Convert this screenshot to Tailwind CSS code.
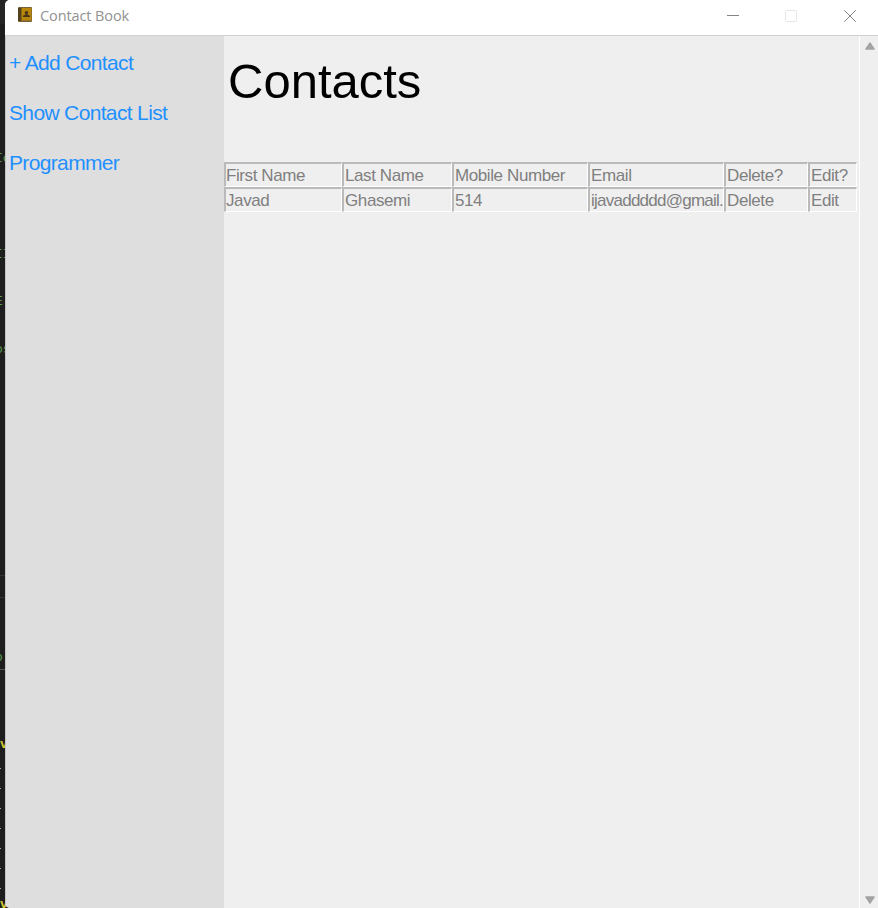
<!DOCTYPE html>
<html lang="en">
<head>
<meta charset="utf-8">
<title>Contact Book</title>
<script src="https://cdn.jsdelivr.net/npm/@tailwindcss/browser@4"></script>
</head>
<body class="relative w-[878px] h-[908px] overflow-hidden bg-[#1e1e1e] font-['Liberation_Sans',Arial,sans-serif]">
<!-- editor behind the window -->
<div class="absolute left-0 top-0 w-[8px] h-[908px] overflow-hidden text-[13px] leading-[16px] font-['Liberation_Mono',monospace] text-[#5c9a4c]">
  <div class="absolute top-0 w-2 h-6 bg-[#252526]"></div>
  <span class="absolute -left-[5px] top-[151px]">Ic</span>
  <span class="absolute -left-[5px] top-[247px]">II</span>
  <span class="absolute -left-[5px] top-[294px]">E</span>
  <span class="absolute -left-[5px] top-[342px]">os</span>
  <span class="absolute -left-[5px] top-[650px]">o</span>
  <div class="absolute top-[575px] w-2 h-px bg-[#333]"></div>
  <div class="absolute top-[597px] w-2 h-px bg-[#333]"></div>
  <div class="absolute top-[669px] w-2 h-px bg-[#555]"></div>
  <span class="absolute left-0 top-[737px] font-bold text-[#d8c832]">v</span>
  <div class="absolute top-[768px] w-px h-px bg-[#aaa]"></div>
  <div class="absolute top-[788px] w-px h-px bg-[#aaa]"></div>
  <div class="absolute top-[808px] w-px h-px bg-[#aaa]"></div>
  <div class="absolute top-[828px] w-px h-px bg-[#aaa]"></div>
  <div class="absolute top-[848px] w-px h-px bg-[#aaa]"></div>
  <div class="absolute top-[868px] w-px h-px bg-[#aaa]"></div>
  <div class="absolute top-[888px] w-px h-px bg-[#aaa]"></div>
  <span class="absolute left-0 top-[897px] font-bold text-[#d8c832]">v</span>
</div>
<div class="relative ml-[5px] w-[873px] h-[908px] flex flex-col bg-[#efefef] rounded-tl-[5px] rounded-bl-[5px] overflow-hidden">
  <header class="h-[36px] shrink-0 flex items-center bg-white border-b border-[#d0d0d0]">
    <svg class="ml-[13px] -mt-[6px] w-[14px] h-[15px] shrink-0" viewBox="0 0 14 15">
      <rect width="14" height="15" rx="1" fill="#776139"/>
      <rect x="0" y="1" width="3" height="13" fill="#54421f"/>
      <rect x="3" y="1" width="1" height="13" fill="#8a6510"/>
      <rect x="4" y="1" width="9.5" height="12.5" fill="#b8860b"/>
      <circle cx="8.500" cy="5.700" r="1.800" fill="#46351a"/>
      <path d="M5 10V8.800Q6.500 7.800 8 7.300H9Q10.500 7.800 12 8.800V10Z" fill="#46351a"/>
    </svg>
    <div class="ml-[8px] -mt-[4px] w-[120px] whitespace-nowrap text-[14.5px] leading-[20px] text-[#929292] font-['Open_Sans','Noto_Sans',sans-serif] tracking-[-0.1px]">Contact Book</div>
    <svg class="ml-auto w-[140px] h-[35px]" viewBox="0 0 140 35" fill="none">
      <rect x="47.500" y="10.500" width="11" height="11" rx="1" stroke="#e7e7e7"/>
      <path d="M106.300 10.300L117.700 21.700M117.700 10.300L106.300 21.700" stroke="#858585"/>
    </svg>
    <div class="absolute left-[722px] top-[15px] w-[12px] h-px bg-[#858585]"></div>
  </header>
  <div class="flex flex-1 min-h-0">
    <nav class="w-[219px] shrink-0 bg-[#dedede] border-l border-[#c4c4c4] pl-[3px] pt-[2px] flex flex-col text-[21px] leading-[50px] text-[#1e90ff] tracking-[-0.65px]">
      <a>+ Add Contact</a>
      <a>Show Contact List</a>
      <a>Programmer</a>
    </nav>
    <main class="w-[635px] shrink-0">
      <h1 class="pl-[4px] pt-[15px] h-[126px] text-[49px] leading-[60px] text-black">Contacts</h1>
      <div class="grid grid-cols-[118px_110px_136px_136px_84px_49px] auto-rows-[25px] text-[17px] leading-[23px] text-[#7f7f7f] tracking-[-0.4px] *:border *:border-t-2 *:border-l-2 *:border-t-[#bababa] *:border-l-[#bababa] *:border-r-white *:border-b-white *:pl-px *:overflow-hidden *:whitespace-nowrap">
        <div class="-indent-px">First Name</div><div>Last Name</div><div>Mobile Number</div><div>Email</div><div>Delete?</div><div>Edit?</div>
        <div class="-indent-px">Javad</div><div>Ghasemi</div><div>514</div><div class="tracking-[-0.75px]">ijavaddddd@gmail.</div><div>Delete</div><div>Edit</div>
      </div>
    </main>
    <aside class="flex-1 border-l border-white flex flex-col justify-between items-center pl-[2px] pt-[6px] pb-[4px]">
      <svg class="w-[10px] h-[8px]" viewBox="0 0 10 8"><path d="M5 .8L9.200 7H.8Z" fill="#a3a3a3" stroke="#a3a3a3" stroke-width="1.300" stroke-linejoin="round"/></svg>
      <svg class="w-[10px] h-[8px]" viewBox="0 0 10 8"><path d="M5 7.200L9.200 1H.8Z" fill="#a3a3a3" stroke="#a3a3a3" stroke-width="1.300" stroke-linejoin="round"/></svg>
    </aside>
  </div>
</div>
</body>
</html>
